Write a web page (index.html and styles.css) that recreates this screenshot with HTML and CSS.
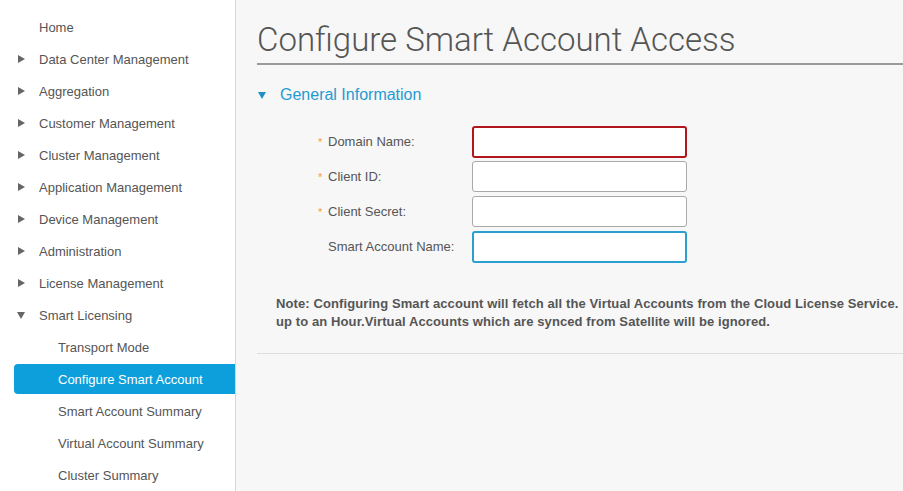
FILE: index.html
```html
<!DOCTYPE html>
<html>
<head>
<meta charset="utf-8">
<link rel="stylesheet" href="styles.css">
</head>
<body>
<div class="app">
  <nav class="sidebar">
    <ul class="nav">
      <li class="item"><span class="caret"></span><span class="label">Home</span></li>
      <li class="item"><span class="caret right"></span><span class="label">Data Center Management</span></li>
      <li class="item"><span class="caret right"></span><span class="label">Aggregation</span></li>
      <li class="item"><span class="caret right"></span><span class="label">Customer Management</span></li>
      <li class="item"><span class="caret right"></span><span class="label">Cluster Management</span></li>
      <li class="item"><span class="caret right"></span><span class="label">Application Management</span></li>
      <li class="item"><span class="caret right"></span><span class="label">Device Management</span></li>
      <li class="item"><span class="caret right"></span><span class="label">Administration</span></li>
      <li class="item"><span class="caret right"></span><span class="label">License Management</span></li>
      <li class="item"><span class="caret down"></span><span class="label">Smart Licensing</span></li>
      <li class="sub"><span class="sublabel">Transport Mode</span></li>
      <li class="sub active"><span class="sublabel">Configure Smart Account</span></li>
      <li class="sub"><span class="sublabel">Smart Account Summary</span></li>
      <li class="sub"><span class="sublabel">Virtual Account Summary</span></li>
      <li class="sub"><span class="sublabel">Cluster Summary</span></li>
    </ul>
  </nav>
  <main class="main">
    <h1 class="title">Configure Smart Account Access</h1>
    <div class="section-head"><span class="tri"></span><span>General Information</span></div>
    <form class="form">
      <div class="row"><label class="flabel"><span class="req">*</span>Domain Name:</label><input class="field error" type="text"></div>
      <div class="row"><label class="flabel"><span class="req">*</span>Client ID:</label><input class="field" type="text"></div>
      <div class="row"><label class="flabel"><span class="req">*</span>Client Secret:</label><input class="field" type="text"></div>
      <div class="row"><label class="flabel"><span class="req blank">*</span>Smart Account Name:</label><input class="field focus" type="text"></div>
    </form>
    <p class="note"><span class="line">Note: Configuring Smart account will fetch all the Virtual Accounts from the Cloud License Service.</span><span class="line">up to an Hour.Virtual Accounts which are synced from Satellite will be ignored.</span></p>
    <hr class="rule">
  </main>
</div>
</body>
</html>
```
FILE: styles.css
```css
html, body {
  margin: 0;
  padding: 0;
  width: 903px;
  height: 491px;
  overflow: hidden;
}
body {
  font-family: "Liberation Sans", Arial, sans-serif;
  background: #f7f7f7;
}
.app {
  display: flex;
  height: 491px;
}
.sidebar {
  width: 235px;
  flex: none;
  background: #ffffff;
  border-right: 1px solid #d6d6d6;
}
.nav {
  list-style: none;
  margin: 0;
  padding: 11px 0 0 0;
}
.item, .sub {
  height: 32px;
  display: flex;
  align-items: center;
  font-size: 13px;
  color: #555555;
}
.item {
  padding-left: 17px;
}
.caret {
  width: 22px;
  height: 8px;
  flex: none;
  position: relative;
}
.caret.right::before {
  content: "";
  position: absolute;
  left: 1px;
  top: 0;
  border-left: 7px solid #666;
  border-top: 4px solid transparent;
  border-bottom: 4px solid transparent;
}
.caret.down::before {
  content: "";
  position: absolute;
  left: 0;
  top: 1px;
  border-top: 7px solid #666;
  border-left: 4px solid transparent;
  border-right: 4px solid transparent;
}
.sub {
  padding-left: 14px;
}
.sublabel {
  display: flex;
  align-items: center;
  height: 30px;
  flex: 1;
  padding-left: 44px;
  border-radius: 4px 0 0 4px;
}
.sub.active .sublabel {
  background: #0d9fdb;
  color: #ffffff;
}
.main {
  flex: 1;
  min-width: 0;
  overflow: hidden;
  padding-left: 21px;
}
.title {
  margin: 20px 0 0 0;
  font-family: Roboto, "Liberation Sans", sans-serif;
  font-weight: 300;
  font-size: 33px;
  color: #555555;
  line-height: 40px;
  padding-bottom: 3px;
  border-bottom: 2px solid #9b9b9b;
}
.section-head {
  display: flex;
  align-items: center;
  margin-top: 19px;
  height: 22px;
  font-size: 16px;
  color: #1f9bd2;
}
.tri {
  width: 0;
  height: 0;
  margin: 0 14px 0 1px;
  border-top: 7px solid #1f8fc4;
  border-left: 4px solid transparent;
  border-right: 4px solid transparent;
}
.form {
  margin-top: 20px;
  display: flex;
  flex-direction: column;
  gap: 4px;
}
.row {
  display: flex;
  align-items: center;
  height: 31px;
}
.flabel {
  width: 215px;
  padding-left: 61px;
  box-sizing: border-box;
  font-size: 13px;
  color: #555555;
  display: flex;
  align-items: center;
}
.req {
  color: #f0a030;
  font-size: 11px;
  width: 10px;
}
.req.blank {
  visibility: hidden;
}
.field {
  width: 215px;
  height: 31px;
  box-sizing: border-box;
  border: 1px solid #a9a9a9;
  border-radius: 3px;
  background: #ffffff;
  margin: 0;
  padding: 0 6px;
  outline: none;
}
.field.error {
  border: 2px solid #b0161c;
  height: 32px;
}
.field.focus {
  border: 2px solid #2b9fcf;
  height: 32px;
}
.note {
  margin: 33px 0 0 19px;
  font-family: "Liberation Sans Narrow", "Liberation Sans", sans-serif;
  font-weight: bold;
  font-size: 13px;
  letter-spacing: 0.1px;
  line-height: 18px;
  color: #555555;
}
.line {
  display: block;
  white-space: nowrap;
}
.rule {
  margin: 22px 0 0 0;
  border: 0;
  border-top: 1px solid #dddddd;
}
```
